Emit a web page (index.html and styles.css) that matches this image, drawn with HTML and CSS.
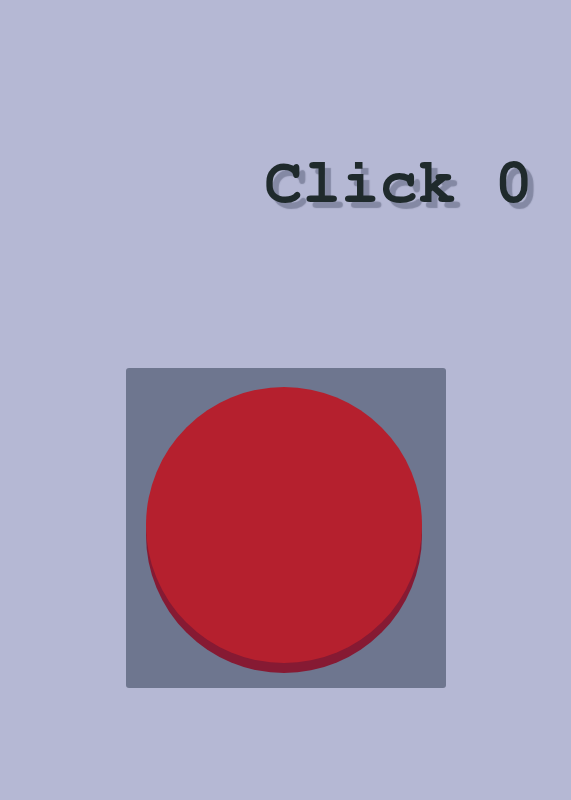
FILE: index.html
```html
<!DOCTYPE html>
<html>
<head>
<meta charset="utf-8">
<link rel="stylesheet" href="styles.css">
</head>
<body>
<main class="page">
  <h1 class="counter">Click 0</h1>
  <div class="pad">
    <button class="big-button" type="button" aria-label="Click"></button>
  </div>
</main>
</body>
</html>
```
FILE: styles.css
```css
html, body {
  margin: 0;
  padding: 0;
}
body {
  background: #b5b8d4;
  width: 571px;
  height: 800px;
  overflow: hidden;
}
.page {
  display: flex;
  flex-direction: column;
  align-items: center;
}
.counter {
  align-self: flex-end;
  margin: 147px 38px 0 0;
  font-family: "FreeMono", "Liberation Mono", monospace;
  font-weight: bold;
  font-size: 64px;
  line-height: 72px;
  color: #1f2a2c;
  text-shadow: 6px 6px 1px rgba(84, 90, 116, 0.5);
}
.pad {
  margin-top: 149px;
  width: 320px;
  height: 320px;
  background: #6e768f;
  border-radius: 3px;
  box-sizing: border-box;
  padding: 19px 20px 0;
}
.big-button {
  display: block;
  width: 276px;
  height: 276px;
  border: none;
  border-radius: 50%;
  background: #b5202e;
  box-shadow: 0 10px 0 #861a33;
  padding: 0;
  cursor: pointer;
}
```
